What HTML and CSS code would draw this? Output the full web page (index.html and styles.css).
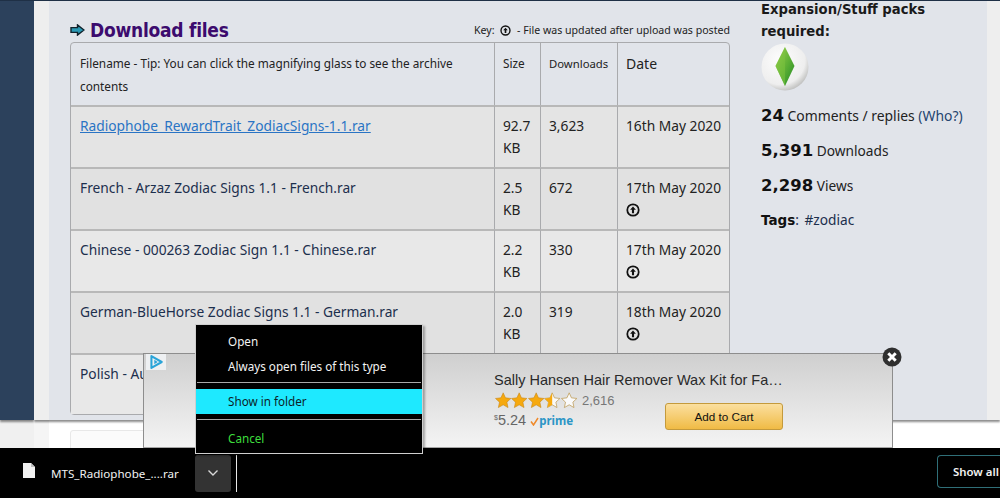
FILE: index.html
```html
<!DOCTYPE html>
<html lang="en">
<head>
<meta charset="utf-8">
<title>Download files</title>
<link rel="stylesheet" href="styles.css">
</head>
<body>
<svg class="defs" width="0" height="0" aria-hidden="true">
  <defs>
    <symbol id="up" viewBox="0 0 12 12">
      <circle cx="6" cy="6" r="4.9" fill="none" stroke="#111" stroke-width="1.5"/>
      <path d="M6 2.9 8.5 5.7H6.9V8.8H5.1V5.7H3.5Z" fill="#111"/>
    </symbol>
    <symbol id="star" viewBox="0 0 16 16">
      <path d="M8 .8 10.2 5.7 15.5 6.3 11.6 9.9 12.7 15.2 8 12.5 3.3 15.2 4.4 9.9.5 6.3 5.8 5.7Z" fill="#f6a90f" stroke="#c98a1c" stroke-width=".6"/>
    </symbol>
    <symbol id="star-half" viewBox="0 0 16 16">
      <path d="M8 .8 10.2 5.7 15.5 6.3 11.6 9.9 12.7 15.2 8 12.5 3.3 15.2 4.4 9.9.5 6.3 5.8 5.7Z" fill="#fafafa" stroke="#c0a060" stroke-width=".8"/>
      <path d="M8 .8V12.5L3.3 15.2 4.4 9.9.5 6.3 5.8 5.7Z" fill="#f6a90f"/>
    </symbol>
    <symbol id="star-empty" viewBox="0 0 16 16">
      <path d="M8 .8 10.2 5.7 15.5 6.3 11.6 9.9 12.7 15.2 8 12.5 3.3 15.2 4.4 9.9.5 6.3 5.8 5.7Z" fill="#fafafa" stroke="#c0a060" stroke-width=".8"/>
    </symbol>
    <radialGradient id="orb" cx=".4" cy=".35" r=".75">
      <stop offset="0" stop-color="#fdfdfd"/>
      <stop offset=".7" stop-color="#eeeeee"/>
      <stop offset="1" stop-color="#a9aaa8"/>
    </radialGradient>
    <linearGradient id="gem" x1="0" y1="0" x2="1" y2="1">
      <stop offset="0" stop-color="#a4d455"/>
      <stop offset=".5" stop-color="#62b236"/>
      <stop offset="1" stop-color="#1f8a26"/>
    </linearGradient>
  </defs>
</svg>

<div class="page">
  <div class="rail"></div>
  <div class="content">
    <main class="panel">
      <section class="files">
        <div class="files-head">
          <h2 class="title">
            <svg class="title-arrow" viewBox="0 0 15 12" width="15" height="12" aria-hidden="true"><path d="M1 3.6H7.5V.9L14 6 7.5 11.1V8.4H1Z" fill="#2a9ab5" stroke="#10222c" stroke-width="1.4"/></svg>
            Download files
          </h2>
          <p class="key">Key: <svg class="key-icon"><use href="#up"/></svg> - File was updated after upload was posted</p>
        </div>
        <table class="table">
          <thead>
            <tr class="row-head">
              <th class="c-name">Filename - Tip: You can click the magnifying glass to see the archive contents</th>
              <th class="c-size">Size</th>
              <th class="c-dl">Downloads</th>
              <th class="c-date">Date</th>
            </tr>
          </thead>
          <tbody>
            <tr class="row-a">
              <td><a class="file-link" href="#">Radiophobe_RewardTrait_ZodiacSigns-1.1.rar</a></td>
              <td>92.7 KB</td><td>3,623</td><td class="date">16th May 2020</td>
            </tr>
            <tr class="row-b">
              <td class="file">French - Arzaz Zodiac Signs 1.1 - French.rar</td>
              <td>2.5 KB</td><td>672</td><td class="date">17th May 2020 <svg class="up"><use href="#up"/></svg></td>
            </tr>
            <tr class="row-c">
              <td class="file">Chinese - 000263 Zodiac Sign 1.1 - Chinese.rar</td>
              <td>2.2 KB</td><td>330</td><td class="date">17th May 2020 <svg class="up"><use href="#up"/></svg></td>
            </tr>
            <tr class="row-b">
              <td class="file">German-BlueHorse Zodiac Signs 1.1 - German.rar</td>
              <td>2.0 KB</td><td>319</td><td class="date">18th May 2020 <svg class="up"><use href="#up"/></svg></td>
            </tr>
            <tr class="row-c">
              <td class="file">Polish - Au</td>
              <td></td><td></td><td></td>
            </tr>
          </tbody>
        </table>
      </section>
      <aside class="side">
        <h3 class="side-title">Expansion/Stuff packs required:</h3>
        <svg class="orb" viewBox="0 0 48 48" width="48" height="48" aria-hidden="true">
          <circle cx="24" cy="24" r="23.5" fill="url(#orb)"/>
          <path d="M24 4 33.5 23 24 43 14.5 23Z" fill="url(#gem)"/>
          <path d="M24 4 24 43 14.5 23Z" fill="#7cc23e" opacity=".55"/>
        </svg>
        <p class="stat stat-first"><b>24</b> Comments / replies <a class="who" href="#">(Who?)</a></p>
        <p class="stat"><b>5,391</b> Downloads</p>
        <p class="stat"><b>2,298</b> Views</p>
        <p class="tags"><b>Tags</b>: <span class="tag">#zodiac</span></p>
      </aside>
    </main>
    <div class="under"><div class="under-card"></div></div>
  </div>

  <div class="ad">
    <div class="ad-badge">
      <svg viewBox="0 0 14 14" width="16" height="16" aria-hidden="true"><path d="M3 1.8 12 7 3 12.2Z" fill="none" stroke="#2aa4d8" stroke-width="1.8" stroke-linejoin="round"/><path d="M5.5 5 8.5 7 5.5 9Z" fill="#2aa4d8"/></svg>
    </div>
    <div class="ad-body">
      <div class="ad-info">
        <div class="ad-title">Sally Hansen Hair Remover Wax Kit for Fa…</div>
        <div class="ad-row">
          <div class="ad-meta">
            <div class="ad-rating">
              <svg class="star"><use href="#star"/></svg><svg class="star"><use href="#star"/></svg><svg class="star"><use href="#star"/></svg><svg class="star"><use href="#star-half"/></svg><svg class="star"><use href="#star-empty"/></svg>
              <span class="ad-count">2,616</span>
            </div>
            <div class="ad-price"><sup class="ad-cur">$</sup>5.24 <span class="prime"><svg class="prime-check" viewBox="0 0 9 9" width="9" height="9" aria-hidden="true"><path d="M1 4.5 3.5 8 8 1" fill="none" stroke="#ef8a2b" stroke-width="1.5"/></svg>prime</span></div>
          </div>
          <button class="ad-btn">Add to Cart</button>
        </div>
      </div>
    </div>
    <svg class="ad-close" viewBox="0 0 20 20" width="20" height="20" aria-hidden="true">
      <circle cx="10" cy="10" r="9.5" fill="#2f2f2f"/>
      <path d="M6.3 6.3 13.7 13.7M13.7 6.3 6.3 13.7" stroke="#fff" stroke-width="3"/>
    </svg>
  </div>

  <div class="menu">
    <div class="menu-item">Open</div>
    <div class="menu-item">Always open files of this type</div>
    <div class="menu-sep"></div>
    <div class="menu-item menu-active">Show in folder</div>
    <div class="menu-sep menu-sep-low"></div>
    <div class="menu-item menu-cancel">Cancel</div>
  </div>
</div>

<footer class="bar">
  <svg class="bar-file" viewBox="0 0 12 15" width="12" height="15" aria-hidden="true"><path d="M0 0H8L12 4V15H0Z" fill="#f1f1f1"/><path d="M8 0 12 4H8Z" fill="#bdbdbd"/></svg>
  <span class="bar-name">MTS_Radiophobe_....rar</span>
  <div class="bar-drop">
    <svg viewBox="0 0 12 8" width="12" height="8" aria-hidden="true"><path d="M1.5 1.5 6 6 10.5 1.5" fill="none" stroke="#d8d8d8" stroke-width="1.4"/></svg>
  </div>
  <div class="bar-line"></div>
  <div class="bar-all">Show all</div>
</footer>
</body>
</html>
```

FILE: styles.css
```css
* { box-sizing: border-box; }
html, body { margin: 0; height: 100%; }
body {
  width: 1000px;
  height: 498px;
  overflow: hidden;
  display: flex;
  flex-direction: column;
  font-family: "DejaVu Sans", sans-serif;
  background: #000;
}
.defs { position: absolute; }

.page { position: relative; flex: 0 0 448px; min-height: 0; display: flex; background: #f0f0f0; }
.rail { flex: 0 0 34px; height: 420px; background: #2c415c; border-top: 1px solid #1f3046; box-shadow: 0 2px 2px rgba(0,0,0,.45); }
.content { flex: 1; min-width: 0; overflow: hidden; display: flex; flex-direction: column; background: #fff; }

.panel {
  flex: 0 0 420px;
  display: flex;
  gap: 31px;
  padding: 0 13px 0 36px;
  background: linear-gradient(#e1e4ea, #e1e4ea) 15px 0 / 938px 100% no-repeat, #eeeeee;
  border-top: 1px solid #1f3046;
  box-shadow: 0 2px 2px rgba(0,0,0,.45);
  position: relative;
}

.files { flex: 0 0 660px; }
.files-head { height: 41px; display: flex; align-items: flex-end; justify-content: space-between; }
.title {
  margin: 0 0 -3px;
  color: #3c0b6e;
  font: bold 19px/30px "DejaVu Sans", sans-serif;
  font-stretch: condensed;
  letter-spacing: -.25px;
  display: flex;
  align-items: center;
  gap: 5px;
}
.key { margin: 0 0 3px; font: 10.6px/18px "Noto Sans", sans-serif; color: #222; display: flex; align-items: center; gap: 3px; white-space: pre; }
.key-icon { width: 11px; height: 11px; }

.table {
  width: 660px;
  border-collapse: separate;
  border-spacing: 0;
  table-layout: fixed;
  border: 1px solid #a9aaad;
  border-radius: 4px;
  font: 13px/22px "Noto Sans", sans-serif;
  color: #222;
}
.table th, .table td {
  padding: 8px 8px;
  vertical-align: top;
  text-align: left;
  font-weight: 400;
  border-left: 1px solid #a9aaad;
  border-top: 2px solid #b8b8b8;
}
.table tr > :first-child { border-left: 0; padding-left: 9px; }
.table thead th { border-top: 0; height: 62px; padding: 9px 8px 4px; font-size: 11.8px; line-height: 23px; }
.table thead th:first-child { padding-left: 9px; }
.table tbody td { height: 62px; font-size: 13.75px; }
.table tbody tr:last-child td { height: 61px; }
.c-name { width: 423px; }
.c-size { width: 46px; }
.c-dl { width: 77px; }
.table .c-dl { font-size: 11.3px; }
.table .c-date { font-size: 14px; }
.table .date { white-space: nowrap; padding-right: 2px; }
.row-a { background: #e4e4e4; }
.row-b { background: #e1e1e1; }
.row-c { background: #e8e8e8; }
.table .file { color: #1c2f4d; }
.file-link { color: #2a74c4; }
.up { display: block; width: 14px; height: 14px; margin-top: 4px; }

.side { flex: 1; color: #222; }
.side-title { margin: -2px 0 0; font: bold 13.2px/22px "DejaVu Sans", sans-serif; color: #1a1a1a; width: 190px; }
.orb { display: block; }
.stat { margin: 10px 0 0; font: 13.7px/25px "Noto Sans", sans-serif; }
.stat-first { margin-top: 12px; font-size: 13.9px; }
.stat b { font: bold 16.5px/25px "DejaVu Sans", sans-serif; color: #111; }
.who { color: #24456f; text-decoration: none; }
.tags { margin: 9px 0 0; font: 13.7px/25px "Noto Sans", sans-serif; color: #1c2f4d; }
.tags b { color: #111; font: bold 13.5px/25px "DejaVu Sans", sans-serif; }
.tag { margin-left: 2px; }

.under { flex: 1; min-height: 0; padding: 10px 0 0 36px; background: linear-gradient(90deg, #f5f5f5 15px, #fff 15px); }
.under-card { height: 40px; width: 660px; border: 1px solid #e8e8e8; border-radius: 3px; background: #fbfbfb; }

.ad {
  position: absolute;
  left: 143px;
  top: 353px;
  width: 750px;
  height: 95px;
  border: 1px solid #8d8d8d;
  border-bottom-color: #a5a5a5;
  background: linear-gradient(#cfcfcf, #f4f4f4);
  font-family: "Liberation Sans", sans-serif;
}
.ad-badge { width: 20px; height: 16px; margin-left: 2px; background: #eef0f2; display: flex; align-items: center; justify-content: center; }
.ad-body { padding: 0 0 0 350px; }
.ad-title { font-size: 14.5px; line-height: 20px; color: #2a2a2a; white-space: nowrap; }
.ad-row { display: flex; }
.ad-meta { width: 171px; }
.ad-rating { display: flex; align-items: center; height: 20px; margin-left: 1px; }
.star { width: 16.4px; height: 16.4px; }
.ad-count { margin-left: 5px; font-size: 13px; color: #777; }
.ad-price { margin-top: 2px; font-size: 14.5px; line-height: 17px; color: #666; white-space: nowrap; }
.ad-cur { font-size: 7px; vertical-align: 5px; line-height: 0; }
.prime { font: bold 11.5px/17px "Noto Sans", sans-serif; color: #2b95c6; }
.prime-check { vertical-align: -1px; }
.ad-btn {
  width: 118px;
  height: 27px;
  margin-top: 13px;
  border: 1px solid #c49a3c;
  border-radius: 3px;
  background: linear-gradient(#fbdf9f, #f0bb45);
  color: #111;
  font: 11.7px "Liberation Sans", sans-serif;
  padding: 0;
}
.ad-close { position: absolute; right: -10px; top: -7px; }

.menu {
  position: absolute;
  z-index: 5;
  left: 195px;
  top: 324px;
  width: 228px;
  height: 130px;
  background: #000;
  border: 1px solid #cfcfcf;
  color: #f2f2f2;
  font: 11.7px/25px "Noto Sans", sans-serif;
  padding-top: 4px;
  box-shadow: 2px 2px 2px rgba(0,0,0,.3);
}
.menu-item { height: 25px; padding-left: 32px; }
.menu-sep { height: 1px; margin: 3px 1px 6px; background: #a8a8a8; }
.menu-active { height: 25px; line-height: 25px; background: #1ee9ff; color: #0c1f28; }
.menu-sep-low { margin: 5px 1px 6px; }
.menu-cancel { color: #3ddc3d; }

.bar {
  flex: 0 0 50px;
  background: #000;
  display: flex;
  align-items: center;
  padding: 0 0 0 23px;
  position: relative;
  z-index: 3;
  color: #f2f2f2;
}
.bar > * { flex: none; }
.bar-file { margin: -5px 16px 0 0; }
.bar-name { width: 144px; font: 11.6px "Noto Sans", sans-serif; white-space: nowrap; }
.bar-drop { width: 36px; height: 37px; background: #333; border-radius: 3px; display: flex; align-items: center; justify-content: center; }
.bar-line { width: 1px; height: 37px; margin-left: 5px; background: #e8e8e8; }
.bar-all {
  margin-left: 700px;
  width: 63px;
  height: 33px;
  margin-top: -4px;
  border: 1px solid #2f6f78;
  border-right: 0;
  border-radius: 4px 0 0 4px;
  padding-left: 15px;
  font: 600 11.4px/31px "Noto Sans", sans-serif;
  white-space: nowrap;
}
```
